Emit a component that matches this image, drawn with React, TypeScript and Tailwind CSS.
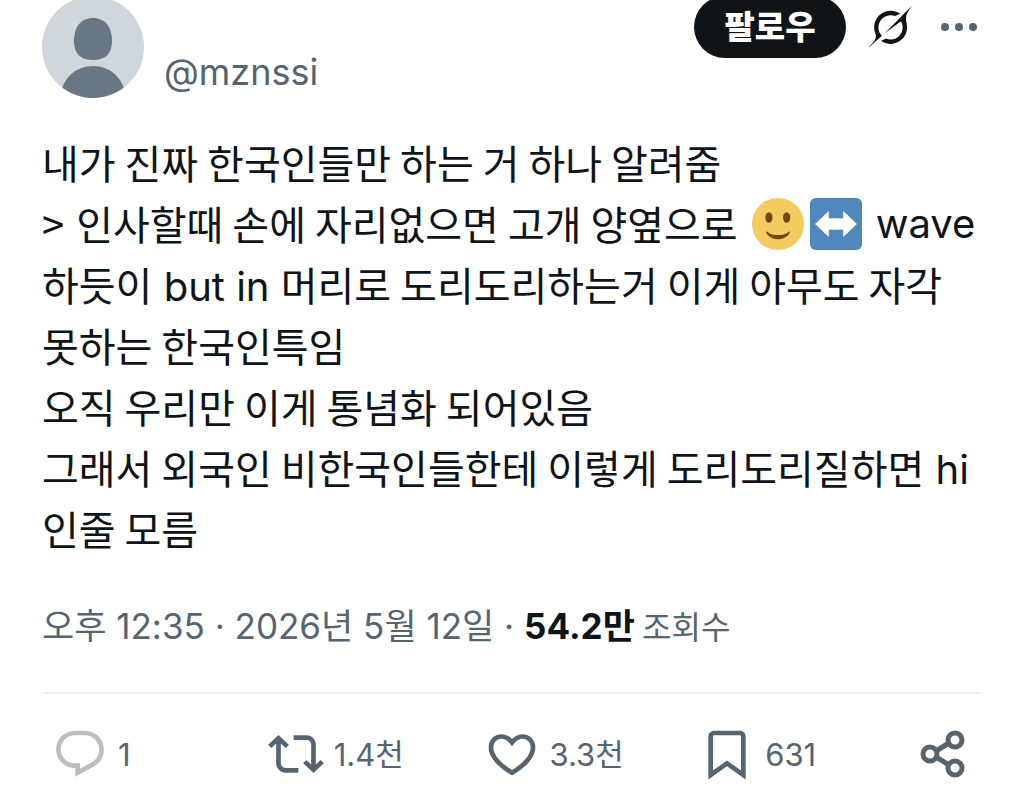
import React from 'react';

const ICONS = {
  reply:
    'M1.751 10c0-4.42 3.584-8 8.005-8h4.366c4.49 0 8.129 3.64 8.129 8.13 0 2.96-1.607 5.68-4.196 7.11l-8.054 4.46v-3.69h-.067c-4.49.1-8.183-3.51-8.183-8.01zm8.005-6c-3.317 0-6.005 2.69-6.005 6 0 3.37 2.77 6.08 6.138 6.01l.351-.01h1.761v2.3l5.087-2.81c1.951-1.08 3.163-3.13 3.163-5.36 0-3.39-2.744-6.13-6.129-6.13H9.756z',
  repost:
    'M4.5 3.88l4.432 4.14-1.364 1.46L5.5 7.55V16c0 1.1.896 2 2 2H13v2H7.5c-2.209 0-4-1.79-4-4V7.55L1.432 9.48.068 8.02 4.5 3.88zM16.5 6H11V4h5.5c2.209 0 4 1.79 4 4v8.45l2.068-1.93 1.364 1.46-4.432 4.14-4.432-4.14 1.364-1.46 2.068 1.93V8c0-1.1-.896-2-2-2z',
  like:
    'M16.697 5.5c-1.222-.06-2.679.51-3.89 2.16l-.805 1.09-.806-1.09C9.984 6.01 8.526 5.44 7.304 5.5c-1.243.07-2.349.78-2.91 1.91-.552 1.12-.633 2.78.479 4.82 1.074 1.97 3.257 4.27 7.129 6.61 3.87-2.34 6.052-4.64 7.126-6.61 1.111-2.04 1.03-3.7.477-4.82-.561-1.13-1.666-1.84-2.908-1.91zm4.187 7.69c-1.351 2.48-4.001 5.12-8.379 7.67l-.503.3-.504-.3c-4.379-2.55-7.029-5.19-8.382-7.67-1.36-2.5-1.41-4.86-.514-6.67.887-1.79 2.647-2.91 4.601-3.01 1.651-.09 3.368.56 4.798 2.01 1.429-1.45 3.146-2.1 4.796-2.01 1.954.1 3.714 1.22 4.601 3.01.896 1.81.846 4.17-.514 6.67z',
  bookmark:
    'M4 4.5C4 3.12 5.119 2 6.5 2h11C18.881 2 20 3.12 20 4.5v18.44l-8-5.71-8 5.71V4.5zM6.5 4c-.276 0-.5.22-.5.5v14.56l6-4.29 6 4.29V4.5c0-.28-.224-.5-.5-.5h-11z',
};

const ACTIONS = [
  { id: 'reply', label: '답글', count: '1', path: ICONS.reply, tone: 'text-[#b9bec3]' },
  { id: 'repost', label: '재게시', count: '1.4천', path: ICONS.repost, tone: 'text-[#566470]' },
  { id: 'like', label: '마음에 들어요', count: '3.3천', path: ICONS.like, tone: 'text-[#566470]' },
  { id: 'bookmark', label: '북마크', count: '631', path: ICONS.bookmark, tone: 'text-[#566470]' },
];

const Latin = ({ children }: { children: React.ReactNode }) => (
  <span className="leading-none font-['Inter','Noto_Sans_CJK_KR',sans-serif]">{children}</span>
);

const Avatar = () => (
  <svg viewBox="0 0 102 102" className="w-[102px] h-[102px] shrink-0 rounded-full" aria-hidden="true">
    <rect width="102" height="102" fill="#cfd6dc" />
    <path d="M51 22c12 0 19 9 19 23 0 12-6 19-19 19s-19-7-19-19c0-14 7-23 19-23z" fill="#697684" />
    <path d="M18 102c2-20 16-32 33-32s31 12 33 32z" fill="#697684" />
  </svg>
);

const GrokIcon = () => (
  <svg viewBox="0 0 33 32" className="w-11 h-11" fill="currentColor" aria-hidden="true">
    <path d="M12.745 20.54l10.97-8.19c.539-.4 1.307-.244 1.564.38 1.349 3.288.746 7.241-1.938 9.955-2.683 2.714-6.417 3.31-9.83 1.954l-3.728 1.745c5.347 3.697 11.84 2.782 15.898-1.324 3.219-3.255 4.216-7.692 3.284-11.693l.008.009c-1.351-5.878.332-8.227 3.782-13.031L33 0l-4.54 4.59v-.014L12.743 20.544m-2.263 1.987c-3.837-3.707-3.175-9.446.1-12.755 2.42-2.449 6.388-3.448 9.852-1.979l3.72-1.737c-.67-.49-1.53-1.017-2.515-1.387-4.455-1.854-9.789-.931-13.41 2.728-3.483 3.523-4.579 8.94-2.697 13.561 1.405 3.454-.899 5.898-3.22 8.364C1.49 30.2.666 31.074 0 32l10.478-9.466" />
  </svg>
);

const SmileEmoji = () => (
  <svg viewBox="0 0 36 36" className="w-[52px] h-[52px]" role="img" aria-label="미소">
    <circle cx="18" cy="18" r="18" fill="#f4cb60" />
    <ellipse cx="11.7" cy="13.5" rx="2.5" ry="3.6" fill="#6b4a0c" />
    <ellipse cx="24" cy="13.5" rx="2.5" ry="3.6" fill="#6b4a0c" />
    <path d="M10.5 23.3c2 1.7 4.5 2.4 7.5 2.4s5.5-.7 7.5-2.4c.4-.3.9 0 .7.5-1.2 2.7-4.4 4.7-8.2 4.7s-7-2-8.2-4.7c-.2-.5.3-.8.7-.5z" fill="#6b4a0c" />
  </svg>
);

const ArrowsEmoji = () => (
  <svg viewBox="0 0 36 36" className="w-[52px] h-[52px]" role="img" aria-label="좌우 화살표">
    <rect width="36" height="36" rx="4" fill="#5087bd" />
    <path d="M3.5 18l9.5-9v5h10v-5l9.5 9-9.5 9v-5H13v5z" fill="#fff" />
  </svg>
);

const App: React.FC = () => {
  return (
    <main className="min-h-screen overflow-hidden bg-white px-[42px] text-[#0f1419] font-['Noto_Sans_CJK_KR',sans-serif]">
      <article>
        <header className="-mt-1 flex items-start">
          <Avatar />
          <a href="#profile" className="ml-5 mt-[52px] text-[36px] leading-[48px] text-[#566470] font-['Inter',sans-serif]">
            @mznssi
          </a>
          <div className="ml-auto flex items-center">
            <button type="button" className="h-[62px] w-[152px] rounded-full bg-[#0f1419] pb-1 text-[33px] leading-[48px] font-black text-white">
              팔로우
            </button>
            <button type="button" aria-label="Grok" className="ml-[22px]">
              <GrokIcon />
            </button>
            <button type="button" aria-label="더 보기" className="ml-7 mr-1 text-[#566470]">
              <svg viewBox="0 0 38 10" className="w-[38px] h-[10px]" fill="currentColor" aria-hidden="true">
                <circle cx="5" cy="5" r="4" />
                <circle cx="19" cy="5" r="4" />
                <circle cx="33" cy="5" r="4" />
              </svg>
            </button>
          </div>
        </header>

        {/* Post text */}
        <div className="mt-[34px] text-[40px] leading-[61px] whitespace-nowrap">
          <p>내가 진짜 한국인들만 하는 거 하나 알려줌</p>
          <p className="flex items-center">
            <span className="mr-3">&gt;</span>
            <span>인사할때 손에 자리없으면 고개 양옆으로</span>
            <span className="mx-[14px] flex gap-[6px]">
              <SmileEmoji />
              <ArrowsEmoji />
            </span>
            <Latin>wave</Latin>
          </p>
          <p>하듯이<Latin> but in </Latin>머리로 도리도리하는거 이게 아무도 자각</p>
          <p>못하는 한국인특임</p>
          <p>오직 우리만 이게 통념화 되어있음</p>
          <p>그래서 외국인 비한국인들한테 이렇게 도리도리질하면<Latin> hi</Latin></p>
          <p>인줄 모름</p>
        </div>

        <div className="mt-10 text-[35px] leading-[50px] text-[#566470] whitespace-nowrap">
          <time dateTime="2026-05-12T12:35">
            오후<Latin> 12:35 · 2026</Latin>년<Latin> 5</Latin>월<Latin> 12</Latin>일
          </time>
          <Latin> · </Latin>
          <strong className="font-bold text-[#0f1419]"><Latin>54.2</Latin>만</strong>
          <span className="text-[32px]"> 조회수</span>
        </div>

        {/* Action bar */}
        <div className="mt-[42px] flex items-center border-t-2 border-[#eff1f2] pt-8 pl-[10px] pr-[11px] text-[#566470]">
          {ACTIONS.map((action) => (
            <div key={action.id} className="flex-1">
              <button type="button" aria-label={action.label} className="flex items-center gap-[10px] whitespace-nowrap text-[31px] leading-[48px]">
                <svg viewBox="0 0 24 24" className={`w-14 h-14 ${action.tone}`} fill="currentColor" aria-hidden="true">
                  <path d={action.path} />
                </svg>
                <Latin>{action.count}</Latin>
              </button>
            </div>
          ))}
          <button type="button" aria-label="공유">
            <svg viewBox="0 0 56 56" className="w-14 h-14" fill="none" stroke="currentColor" strokeWidth="5" aria-hidden="true">
              <circle cx="40" cy="14" r="7" />
              <circle cx="15" cy="28" r="7" />
              <circle cx="40" cy="42" r="7" />
              <path d="M21 25l13-8M21 31l13 8" />
            </svg>
          </button>
        </div>
      </article>
    </main>
  );
};

export default App;
